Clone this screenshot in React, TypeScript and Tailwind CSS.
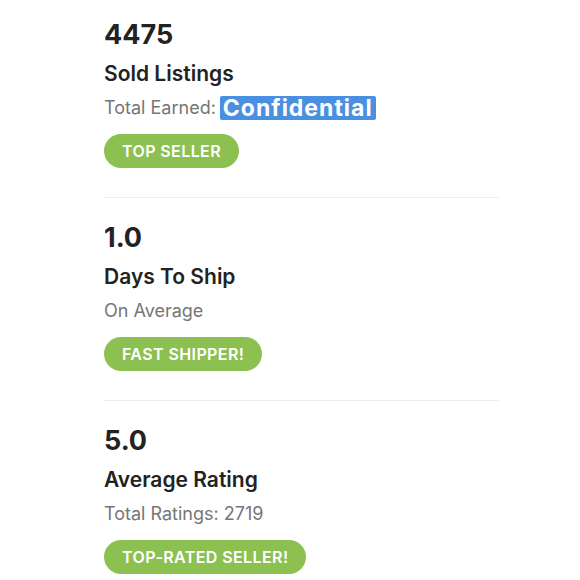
import React from "react";

const font = { fontFamily: "Inter, 'Noto Sans', sans-serif" };

function Pill({ children }: { children: React.ReactNode }) {
  return (
    <div className="mt-[14px] inline-flex h-[34px] items-center rounded-full bg-[#8cc152] px-[18px] text-[16px] font-semibold tracking-[0.4px] text-white">
      {children}
    </div>
  );
}

function Section({
  first,
  last,
  num,
  title,
  sub,
  pill,
}: {
  first?: boolean;
  last?: boolean;
  num: string;
  title: string;
  sub: React.ReactNode;
  pill: string;
}) {
  return (
    <div
      className={`${first ? "pt-[18px]" : "pt-[23px]"} ${
        last ? "" : "border-b border-[#ececec] pb-[29px]"
      } flex flex-col items-start`}
    >
      <div className="text-[27px] font-bold leading-[34px] text-[#222]">{num}</div>
      <div className="mt-[8px] text-[21px] font-semibold leading-[28px] text-[#222]">{title}</div>
      <div className="mt-[8px] text-[18px] leading-[24px] text-[#767676]">{sub}</div>
      <Pill>{pill}</Pill>
    </div>
  );
}

export default function App() {
  return (
    <div className="h-[580px] w-[580px] bg-white" style={font}>
      <div className="ml-[104px] w-[395px]">
        <Section
          first
          num="4475"
          title="Sold Listings"
          sub={
            <span className="flex items-center">
              Total Earned:
              <span className="ml-[4px] inline-block rounded-[2px] bg-[#4a90e2] px-[3px] text-[23px] font-bold leading-[24px] tracking-[1px] text-white">
                Confidential
              </span>
            </span>
          }
          pill="TOP SELLER"
        />
        <Section num="1.0" title="Days To Ship" sub="On Average" pill="FAST SHIPPER!" />
        <Section last num="5.0" title="Average Rating" sub="Total Ratings: 2719" pill="TOP-RATED SELLER!" />
      </div>
    </div>
  );
}
